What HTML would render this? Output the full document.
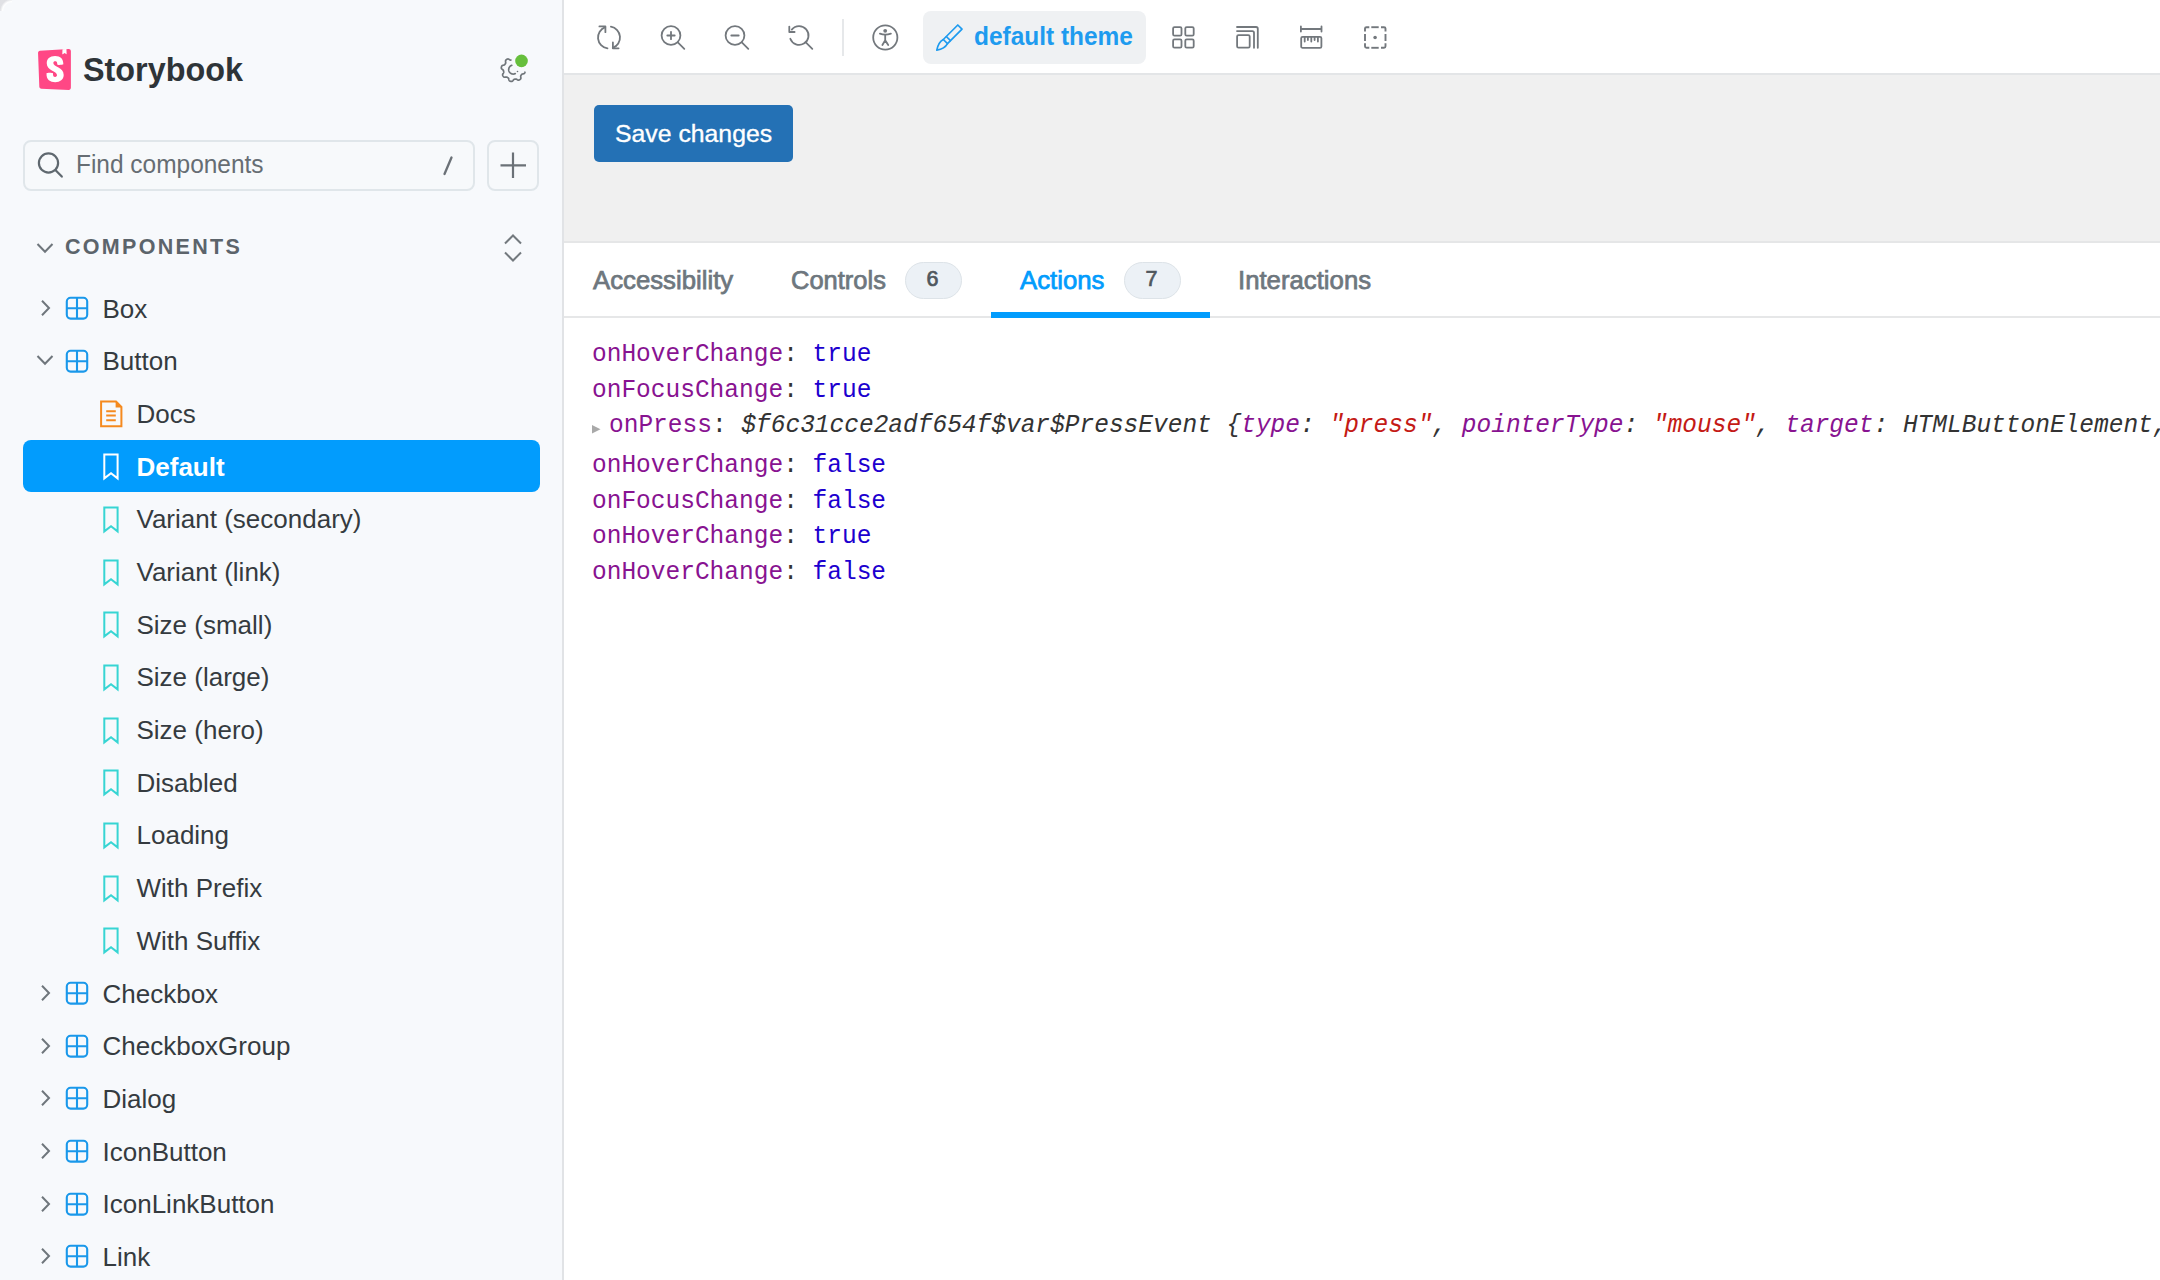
<!DOCTYPE html><html><head><meta charset="utf-8"><title>Storybook</title><style>
*{margin:0;padding:0;box-sizing:border-box}
html,body{width:2160px;height:1280px;overflow:hidden;background:#fff;font-family:"Liberation Sans", sans-serif}
.t{position:absolute;white-space:pre}
.a{position:absolute}
svg{position:absolute;overflow:visible}
</style></head><body>
<div class="a" style="left:0;top:0;width:562px;height:1280px;background:#F7F9FC"></div>
<div class="a" style="left:562px;top:0;width:2px;height:1280px;background:#E1E3E6"></div>
<div class="a" style="left:0;top:0;width:12px;height:11px;background:radial-gradient(circle at 12px 11px, rgba(246,249,252,0) 8px, rgba(255,255,255,.8) 9.5px, rgba(205,205,210,.55) 12px)"></div>
<svg style="left:38px;top:49px" width="33" height="41" viewBox="0 0 256 319"><path fill="#FF4785" d="M9.872 293.324.012 30.574C-.315 21.895 6.338 14.54 15.005 13.998L238.494.03c8.822-.552 16.42 6.153 16.972 14.975.02.332.031.665.031.998v286.314c0 8.839-7.165 16.004-16.004 16.004-.24 0-.48-.005-.718-.016l-213.627-9.595c-8.32-.373-14.963-7.065-15.276-15.386Z"/><path fill="#FFF" d="m188.665 39.127 1.527-36.716L220.884 0l1.322 37.863a2.387 2.387 0 0 1-3.864 1.96l-11.835-9.325-14.013 10.63a2.387 2.387 0 0 1-3.829-2.001Zm-39.251 80.853c0 6.227 41.942 3.243 47.572-1.131 0-42.402-22.752-64.684-64.415-64.684-41.662 0-65.005 22.628-65.005 56.57 0 59.117 79.78 60.249 79.78 92.494 0 9.052-4.433 14.426-14.184 14.426-12.705 0-17.729-6.49-17.138-28.552 0-4.786-48.458-6.278-49.936 0-3.762 53.466 29.548 68.887 67.665 68.887 36.935 0 65.892-19.687 65.892-55.326 0-63.36-80.961-61.663-80.961-93.06 0-12.728 9.455-14.425 15.07-14.425 5.909 0 16.546 1.042 15.66 24.801Z"/></svg>
<div class="t" style="left:83.00px;top:53.27px;font-size:33px;line-height:33px;color:#2E3438;font-weight:700;transform:scaleX(0.98);transform-origin:0 0;">Storybook</div>
<svg style="left:500px;top:56px" width="28" height="28" viewBox="0 0 28 28"><g fill="none" stroke="#6F757A" stroke-width="1.7" stroke-linecap="round" stroke-linejoin="round"><path d="M24.95 16.24 L24.89 16.44 L24.82 16.64 L24.74 16.84 L24.64 17.03 L24.52 17.21 L24.37 17.37 L24.18 17.52 L23.94 17.65 L23.65 17.75 L23.33 17.83 L23.00 17.89 L22.69 17.96 L22.42 18.03 L22.19 18.11 L22.01 18.21 L21.85 18.33 L21.72 18.45 L21.60 18.58 L21.49 18.71 L21.39 18.85 L21.29 18.99 L21.20 19.13 L21.10 19.27 L21.01 19.41 L20.92 19.56 L20.84 19.72 L20.77 19.88 L20.72 20.06 L20.69 20.27 L20.68 20.50 L20.71 20.77 L20.76 21.08 L20.81 21.41 L20.86 21.74 L20.88 22.05 L20.85 22.32 L20.79 22.56 L20.69 22.77 L20.57 22.95 L20.43 23.11 L20.28 23.26 L20.12 23.40 L19.95 23.53 L19.78 23.65 L19.60 23.76 L19.42 23.86 L19.23 23.95 L19.04 24.03 L18.83 24.10 L18.62 24.14 L18.39 24.15 L18.15 24.12 L17.89 24.04 L17.62 23.91 L17.34 23.74 L17.06 23.55 L16.80 23.38 L16.55 23.23 L16.33 23.13 L16.13 23.08 L15.94 23.05 L15.76 23.04 L15.59 23.05 L15.41 23.07 L15.24 23.09 L15.08 23.12 L14.91 23.15 L14.74 23.18 L14.58 23.22 L14.41 23.26 L14.24 23.31 L14.08 23.38 L13.91 23.47 L13.74 23.59 L13.57 23.75 L13.40 23.96 L13.22 24.22 L13.03 24.49 L12.83 24.76 L12.62 24.99 L12.41 25.16 L12.19 25.29 L11.98 25.37 L11.76 25.41 L11.55 25.43 L11.34 25.43 L11.13 25.41 L10.92 25.38 L10.71 25.34 L10.51 25.30 L10.31 25.24 L10.11 25.17 L9.91 25.09 L9.72 24.99 L9.54 24.87 L9.38 24.72 L9.23 24.53 L9.10 24.29 L9.00 24.00 L8.92 23.68 L8.86 23.35 L8.79 23.04 L8.72 22.77 L8.64 22.54 L8.54 22.36 L8.42 22.20 L8.30 22.07 L8.17 21.95 L8.04 21.84 L7.90 21.74 L7.76 21.64 L7.62 21.55 L7.48 21.45 L7.34 21.36 L7.19 21.27 L7.03 21.19 L6.87 21.12 L6.69 21.07 L6.48 21.04 L6.25 21.03 L5.98 21.06 L5.67 21.11 L5.34 21.16 L5.01 21.21 L4.70 21.23 L4.43 21.20 L4.19 21.14 L3.98 21.04 L3.80 20.92 L3.64 20.78 L3.49 20.63 L3.35 20.47 L3.22 20.30 L3.10 20.13 L2.99 19.95 L2.89 19.77 L2.80 19.58 L2.72 19.39 L2.65 19.18 L2.61 18.97 L2.60 18.74 L2.63 18.50 L2.71 18.24 L2.84 17.97 L3.01 17.69 L3.20 17.41 L3.37 17.15 L3.52 16.90 L3.62 16.68 L3.67 16.48 L3.70 16.29 L3.71 16.11 L3.70 15.94 L3.68 15.76 L3.66 15.59 L3.63 15.43 L3.60 15.26 L3.57 15.09 L3.53 14.93 L3.49 14.76 L3.44 14.59 L3.37 14.43 L3.28 14.26 L3.16 14.09 L3.00 13.92 L2.79 13.75 L2.53 13.57 L2.26 13.38 L1.99 13.18 L1.76 12.97 L1.59 12.76 L1.46 12.54 L1.38 12.33 L1.34 12.11 L1.32 11.90 L1.32 11.69 L1.34 11.48 L1.37 11.27 L1.41 11.06 L1.45 10.86 L1.51 10.66 L1.58 10.46 L1.66 10.26 L1.76 10.07 L1.88 9.89 L2.03 9.73 L2.22 9.58 L2.46 9.45 L2.75 9.35 L3.07 9.27 L3.40 9.21 L3.71 9.14 L3.98 9.07 L4.21 8.99 L4.39 8.89 L4.55 8.77 L4.68 8.65 L4.80 8.52 L4.91 8.39 L5.01 8.25 L5.11 8.11 L5.20 7.97 L5.30 7.83 L5.39 7.69 L5.48 7.54 L5.56 7.38 L5.63 7.22 L5.68 7.04 L5.71 6.83 L5.72 6.60 L5.69 6.33 L5.64 6.02 L5.59 5.69 L5.54 5.36 L5.52 5.05 L5.55 4.78 L5.61 4.54 L5.71 4.33 L5.83 4.15 L5.97 3.99 L6.12 3.84 L6.28 3.70 L6.45 3.57 L6.62 3.45 L6.80 3.34 L6.98 3.24 L7.17 3.15 L7.36 3.07 L7.57 3.00 L7.78 2.96 L8.01 2.95 L8.25 2.98 L8.51 3.06 L8.78 3.19 L9.06 3.36 L9.34 3.55 L9.60 3.72 L9.85 3.87 L10.07 3.97 L10.27 4.02 L10.46 4.05 L10.64 4.06 L10.81 4.05 L10.99 4.03"/><path d="M15.24 17.56 L15.03 17.66 L14.81 17.75 L14.59 17.83 L14.36 17.90 L14.14 17.95 L13.90 17.99 L13.67 18.03 L13.44 18.04 L13.20 18.05 L12.96 18.04 L12.73 18.03 L12.50 17.99 L12.26 17.95 L12.04 17.90 L11.81 17.83 L11.59 17.75 L11.37 17.66 L11.16 17.56 L10.95 17.45 L10.75 17.32 L10.55 17.19 L10.37 17.05 L10.19 16.89 L10.02 16.73 L9.86 16.56 L9.70 16.38 L9.56 16.20 L9.43 16.00 L9.30 15.80 L9.19 15.59 L9.09 15.38 L9.00 15.16 L8.92 14.94 L8.85 14.71 L8.80 14.49 L8.76 14.25 L8.72 14.02 L8.71 13.79 L8.70 13.55 L8.71 13.31 L8.72 13.08 L8.76 12.85 L8.80 12.61 L8.85 12.39 L8.92 12.16 L9.00 11.94 L9.09 11.72 L9.19 11.51 L9.30 11.30 L9.43 11.10 L9.56 10.90 L9.70 10.72 L9.86 10.54 L10.02 10.37 L10.19 10.21 L10.37 10.05 L10.55 9.91 L10.75 9.78 L10.95 9.65 L11.16 9.54 L11.37 9.44 L11.59 9.35 L11.81 9.27"/></g><circle cx="17.5" cy="15.5" r="0.8" fill="#6F757A"/><circle cx="21.5" cy="4.9" r="6.3" fill="#66BF3C"/></svg>
<div class="a" style="left:23px;top:139.5px;width:452px;height:51.5px;border:2px solid #E0E6EA;border-radius:8px;background:#F7F9FB"></div>
<svg style="left:36px;top:151px" width="30" height="30" viewBox="0 0 30 30"><g fill="none" stroke="#5F686F" stroke-width="2.2" stroke-linecap="round"><circle cx="12.5" cy="12" r="9.6"/><path d="M19.6 19.2 L25.8 25.6"/></g></svg>
<div class="t" style="left:75.50px;top:152.41px;font-size:25.5px;line-height:25.5px;color:#666D73;font-weight:400;transform:scaleX(0.959);transform-origin:0 0;">Find components</div>
<svg style="left:440px;top:154px" width="16" height="22" viewBox="0 0 16 22"><path d="M11.5 3.5 L4.5 20" stroke="#6B7177" stroke-width="2.3" stroke-linecap="round"/></svg>
<div class="a" style="left:487px;top:139.5px;width:52px;height:51.5px;border:2px solid #E0E6EA;border-radius:8px;background:#F7F9FB"></div>
<svg style="left:499px;top:151px" width="28" height="28" viewBox="0 0 28 28"><path d="M14 1.5V27M1.5 14.3H27" stroke="#6B7177" stroke-width="2.2"/></svg>
<svg style="left:35px;top:240px" width="20" height="16" viewBox="0 0 20 16"><path d="M2.5 4 L10 11.8 L17.5 4" fill="none" stroke="#6F767C" stroke-width="2"/></svg>
<div class="t" style="left:65.00px;top:236.60px;font-size:21.5px;line-height:21.5px;color:#5C646B;font-weight:700;letter-spacing:2.3px;">COMPONENTS</div>
<svg style="left:500px;top:232px" width="26" height="32" viewBox="0 0 26 32"><g fill="none" stroke="#73797E" stroke-width="2"><path d="M5 11.5 L13 3.5 L21 11.5"/><path d="M5 20.5 L13 28.5 L21 20.5"/></g></svg>
<svg style="left:38px;top:298.20px" width="14" height="20" viewBox="0 0 14 20"><path d="M4 2.8 L11 10 L4 17.2" fill="none" stroke="#6F767C" stroke-width="2"/></svg>
<svg style="left:65px;top:296.20px" width="24" height="24" viewBox="0 0 24 24"><g fill="none" stroke="#1A98EA" stroke-width="2.1"><rect x="1.8" y="1.8" width="20.4" height="20.8" rx="3.8"/><path d="M12 1.8V22.6M1.8 12.2H22.2"/></g></svg>
<div class="t" style="left:102.50px;top:295.79px;font-size:26px;line-height:26px;color:#353B40;font-weight:400;">Box</div>
<svg style="left:35px;top:353.37px" width="20" height="14" viewBox="0 0 20 14"><path d="M2.5 3 L10 10.8 L17.5 3" fill="none" stroke="#6F767C" stroke-width="2"/></svg>
<svg style="left:65px;top:348.87px" width="24" height="24" viewBox="0 0 24 24"><g fill="none" stroke="#1A98EA" stroke-width="2.1"><rect x="1.8" y="1.8" width="20.4" height="20.8" rx="3.8"/><path d="M12 1.8V22.6M1.8 12.2H22.2"/></g></svg>
<div class="t" style="left:102.50px;top:348.46px;font-size:26px;line-height:26px;color:#353B40;font-weight:400;">Button</div>
<svg style="left:98.5px;top:398.54px" width="26" height="30" viewBox="0 0 26 30"><g fill="none" stroke="#F58A1F" stroke-width="2"><path d="M2.1 2.6 H17 L22.4 8 V27.3 H2.1 Z"/><path d="M7.2 12.2H16.8M7.2 16.6H16.8M7.2 21.2H16.8"/></g><path d="M16.6 2.6 L22.4 8.4 H16.6 Z" fill="#F58A1F"/></svg>
<div class="t" style="left:136.50px;top:401.13px;font-size:26px;line-height:26px;color:#353B40;font-weight:400;">Docs</div>
<div class="a" style="left:22.5px;top:440.21px;width:517px;height:52.2px;background:#029CFD;border-radius:8px"></div>
<svg style="left:101px;top:451.21px" width="20" height="30" viewBox="0 0 20 30"><path d="M3.3 3.6 H16.6 V27.4 L10 22.2 L3.3 27.4 Z" fill="none" stroke="#FFFFFF" stroke-width="2" stroke-linejoin="miter"/></svg>
<div class="t" style="left:136.50px;top:453.80px;font-size:26px;line-height:26px;color:#FFFFFF;font-weight:700;">Default</div>
<svg style="left:101px;top:503.88px" width="20" height="30" viewBox="0 0 20 30"><path d="M3.3 3.6 H16.6 V27.4 L10 22.2 L3.3 27.4 Z" fill="none" stroke="#37D5D3" stroke-width="2" stroke-linejoin="miter"/></svg>
<div class="t" style="left:136.50px;top:506.47px;font-size:26px;line-height:26px;color:#353B40;font-weight:400;">Variant (secondary)</div>
<svg style="left:101px;top:556.55px" width="20" height="30" viewBox="0 0 20 30"><path d="M3.3 3.6 H16.6 V27.4 L10 22.2 L3.3 27.4 Z" fill="none" stroke="#37D5D3" stroke-width="2" stroke-linejoin="miter"/></svg>
<div class="t" style="left:136.50px;top:559.14px;font-size:26px;line-height:26px;color:#353B40;font-weight:400;">Variant (link)</div>
<svg style="left:101px;top:609.22px" width="20" height="30" viewBox="0 0 20 30"><path d="M3.3 3.6 H16.6 V27.4 L10 22.2 L3.3 27.4 Z" fill="none" stroke="#37D5D3" stroke-width="2" stroke-linejoin="miter"/></svg>
<div class="t" style="left:136.50px;top:611.81px;font-size:26px;line-height:26px;color:#353B40;font-weight:400;">Size (small)</div>
<svg style="left:101px;top:661.89px" width="20" height="30" viewBox="0 0 20 30"><path d="M3.3 3.6 H16.6 V27.4 L10 22.2 L3.3 27.4 Z" fill="none" stroke="#37D5D3" stroke-width="2" stroke-linejoin="miter"/></svg>
<div class="t" style="left:136.50px;top:664.48px;font-size:26px;line-height:26px;color:#353B40;font-weight:400;">Size (large)</div>
<svg style="left:101px;top:714.56px" width="20" height="30" viewBox="0 0 20 30"><path d="M3.3 3.6 H16.6 V27.4 L10 22.2 L3.3 27.4 Z" fill="none" stroke="#37D5D3" stroke-width="2" stroke-linejoin="miter"/></svg>
<div class="t" style="left:136.50px;top:717.15px;font-size:26px;line-height:26px;color:#353B40;font-weight:400;">Size (hero)</div>
<svg style="left:101px;top:767.23px" width="20" height="30" viewBox="0 0 20 30"><path d="M3.3 3.6 H16.6 V27.4 L10 22.2 L3.3 27.4 Z" fill="none" stroke="#37D5D3" stroke-width="2" stroke-linejoin="miter"/></svg>
<div class="t" style="left:136.50px;top:769.82px;font-size:26px;line-height:26px;color:#353B40;font-weight:400;">Disabled</div>
<svg style="left:101px;top:819.90px" width="20" height="30" viewBox="0 0 20 30"><path d="M3.3 3.6 H16.6 V27.4 L10 22.2 L3.3 27.4 Z" fill="none" stroke="#37D5D3" stroke-width="2" stroke-linejoin="miter"/></svg>
<div class="t" style="left:136.50px;top:822.49px;font-size:26px;line-height:26px;color:#353B40;font-weight:400;">Loading</div>
<svg style="left:101px;top:872.57px" width="20" height="30" viewBox="0 0 20 30"><path d="M3.3 3.6 H16.6 V27.4 L10 22.2 L3.3 27.4 Z" fill="none" stroke="#37D5D3" stroke-width="2" stroke-linejoin="miter"/></svg>
<div class="t" style="left:136.50px;top:875.16px;font-size:26px;line-height:26px;color:#353B40;font-weight:400;">With Prefix</div>
<svg style="left:101px;top:925.24px" width="20" height="30" viewBox="0 0 20 30"><path d="M3.3 3.6 H16.6 V27.4 L10 22.2 L3.3 27.4 Z" fill="none" stroke="#37D5D3" stroke-width="2" stroke-linejoin="miter"/></svg>
<div class="t" style="left:136.50px;top:927.83px;font-size:26px;line-height:26px;color:#353B40;font-weight:400;">With Suffix</div>
<svg style="left:38px;top:982.91px" width="14" height="20" viewBox="0 0 14 20"><path d="M4 2.8 L11 10 L4 17.2" fill="none" stroke="#6F767C" stroke-width="2"/></svg>
<svg style="left:65px;top:980.91px" width="24" height="24" viewBox="0 0 24 24"><g fill="none" stroke="#1A98EA" stroke-width="2.1"><rect x="1.8" y="1.8" width="20.4" height="20.8" rx="3.8"/><path d="M12 1.8V22.6M1.8 12.2H22.2"/></g></svg>
<div class="t" style="left:102.50px;top:980.50px;font-size:26px;line-height:26px;color:#353B40;font-weight:400;">Checkbox</div>
<svg style="left:38px;top:1035.58px" width="14" height="20" viewBox="0 0 14 20"><path d="M4 2.8 L11 10 L4 17.2" fill="none" stroke="#6F767C" stroke-width="2"/></svg>
<svg style="left:65px;top:1033.58px" width="24" height="24" viewBox="0 0 24 24"><g fill="none" stroke="#1A98EA" stroke-width="2.1"><rect x="1.8" y="1.8" width="20.4" height="20.8" rx="3.8"/><path d="M12 1.8V22.6M1.8 12.2H22.2"/></g></svg>
<div class="t" style="left:102.50px;top:1033.17px;font-size:26px;line-height:26px;color:#353B40;font-weight:400;">CheckboxGroup</div>
<svg style="left:38px;top:1088.25px" width="14" height="20" viewBox="0 0 14 20"><path d="M4 2.8 L11 10 L4 17.2" fill="none" stroke="#6F767C" stroke-width="2"/></svg>
<svg style="left:65px;top:1086.25px" width="24" height="24" viewBox="0 0 24 24"><g fill="none" stroke="#1A98EA" stroke-width="2.1"><rect x="1.8" y="1.8" width="20.4" height="20.8" rx="3.8"/><path d="M12 1.8V22.6M1.8 12.2H22.2"/></g></svg>
<div class="t" style="left:102.50px;top:1085.84px;font-size:26px;line-height:26px;color:#353B40;font-weight:400;">Dialog</div>
<svg style="left:38px;top:1140.92px" width="14" height="20" viewBox="0 0 14 20"><path d="M4 2.8 L11 10 L4 17.2" fill="none" stroke="#6F767C" stroke-width="2"/></svg>
<svg style="left:65px;top:1138.92px" width="24" height="24" viewBox="0 0 24 24"><g fill="none" stroke="#1A98EA" stroke-width="2.1"><rect x="1.8" y="1.8" width="20.4" height="20.8" rx="3.8"/><path d="M12 1.8V22.6M1.8 12.2H22.2"/></g></svg>
<div class="t" style="left:102.50px;top:1138.51px;font-size:26px;line-height:26px;color:#353B40;font-weight:400;">IconButton</div>
<svg style="left:38px;top:1193.59px" width="14" height="20" viewBox="0 0 14 20"><path d="M4 2.8 L11 10 L4 17.2" fill="none" stroke="#6F767C" stroke-width="2"/></svg>
<svg style="left:65px;top:1191.59px" width="24" height="24" viewBox="0 0 24 24"><g fill="none" stroke="#1A98EA" stroke-width="2.1"><rect x="1.8" y="1.8" width="20.4" height="20.8" rx="3.8"/><path d="M12 1.8V22.6M1.8 12.2H22.2"/></g></svg>
<div class="t" style="left:102.50px;top:1191.18px;font-size:26px;line-height:26px;color:#353B40;font-weight:400;">IconLinkButton</div>
<svg style="left:38px;top:1246.26px" width="14" height="20" viewBox="0 0 14 20"><path d="M4 2.8 L11 10 L4 17.2" fill="none" stroke="#6F767C" stroke-width="2"/></svg>
<svg style="left:65px;top:1244.26px" width="24" height="24" viewBox="0 0 24 24"><g fill="none" stroke="#1A98EA" stroke-width="2.1"><rect x="1.8" y="1.8" width="20.4" height="20.8" rx="3.8"/><path d="M12 1.8V22.6M1.8 12.2H22.2"/></g></svg>
<div class="t" style="left:102.50px;top:1243.85px;font-size:26px;line-height:26px;color:#353B40;font-weight:400;">Link</div>
<div class="a" style="left:564px;top:73px;width:1596px;height:2px;background:#E3E5E7"></div>
<svg style="left:593px;top:21px" width="32" height="32" viewBox="0 0 32 32"><g fill="none" stroke="#73787D" stroke-width="1.8" stroke-linecap="round" stroke-linejoin="round"><path d="M14.47 27.39 A11 11 0 0 1 12.24 6.16"/><path d="M6.4 5.4 H12.4 V11.2"/><path d="M17.9 5.67 A11 11 0 0 1 19.76 26.84"/><path d="M19.9 21.4 V27.3 H25.6"/></g></svg>
<svg style="left:657px;top:21px" width="32" height="32" viewBox="0 0 32 32"><g fill="none" stroke="#73787D" stroke-width="1.8" stroke-linecap="round" stroke-linejoin="round"><circle cx="14" cy="14.5" r="9.4"/><path d="M20.8 21.3 L27.3 27.8"/><path d="M10.3 14.5H17.7M14 10.8V18.2"/></g></svg>
<svg style="left:721px;top:21px" width="32" height="32" viewBox="0 0 32 32"><g fill="none" stroke="#73787D" stroke-width="1.8" stroke-linecap="round" stroke-linejoin="round"><circle cx="14" cy="14.5" r="9.4"/><path d="M20.8 21.3 L27.3 27.8"/><path d="M10.3 14.5H17.7"/></g></svg>
<svg style="left:785px;top:21px" width="32" height="32" viewBox="0 0 32 32"><g fill="none" stroke="#73787D" stroke-width="1.8" stroke-linecap="round" stroke-linejoin="round"><path d="M5.3 17.8 A9.4 9.4 0 1 0 6.8 8.6"/><path d="M20.8 21.3 L27.3 27.8"/><path d="M4.3 5.6 V11 H9.6"/></g></svg>
<div class="a" style="left:842px;top:19px;width:2px;height:37px;background:#E6E8EA"></div>
<svg style="left:869px;top:21px" width="32" height="32" viewBox="0 0 32 32"><g fill="none" stroke="#73787D" stroke-width="1.8" stroke-linecap="round" stroke-linejoin="round"><circle cx="16.3" cy="16.5" r="12.1"/><path d="M10.9 12.6 Q16.2 14.6 21.9 12.6"/><path d="M16.2 14.2 V19.3 L13.4 24 M16.2 19.3 L19.2 24"/></g><circle cx="16.2" cy="9.8" r="1.9" fill="#73787D"/></svg>
<div class="a" style="left:922.5px;top:11px;width:223px;height:52.5px;background:#EFF1F3;border-radius:8px"></div>
<svg style="left:933px;top:21px" width="32" height="32" viewBox="0 0 32 32"><g fill="none" stroke="#1E9BEF" stroke-width="1.7" stroke-linejoin="round"><path d="M24.8 4 L29 8.2 L17.5 19.7 L13.3 15.5 Z"/><path d="M13.3 15.5 L10.3 18.5 L14.5 22.7 L17.5 19.7"/><path d="M10.3 18.5 C6.5 20.5 4.6 25 3.8 29.2 C8 28.5 12.4 26.6 14.5 22.7"/></g></svg>
<div class="t" style="left:974.00px;top:22.99px;font-size:26px;line-height:26px;color:#1E9BEF;font-weight:700;transform:scaleX(0.94);transform-origin:0 0;">default theme</div>
<svg style="left:1167px;top:21px" width="32" height="32" viewBox="0 0 32 32"><g fill="none" stroke="#73787D" stroke-width="1.8" stroke-linecap="round" stroke-linejoin="round"><rect x="6.1" y="6.1" width="8.4" height="8.6" rx="1.4"/><rect x="18.3" y="6.1" width="8.4" height="8.6" rx="1.4"/><rect x="6.1" y="18.3" width="8.4" height="8.4" rx="1.4"/><rect x="18.3" y="18.3" width="8.4" height="8.4" rx="1.4"/></g></svg>
<svg style="left:1231px;top:21px" width="32" height="32" viewBox="0 0 32 32"><g fill="none" stroke="#73787D" stroke-width="1.8" stroke-linecap="round" stroke-linejoin="round"><rect x="6.1" y="14.1" width="12.6" height="12.6" rx="1.4"/><path d="M6 10.1 H21.3 Q23 10.1 23 11.8 V26.8"/><path d="M6 6 H25 Q26.8 6 26.8 7.8 V26.8"/></g></svg>
<svg style="left:1295px;top:21px" width="32" height="32" viewBox="0 0 32 32"><g fill="none" stroke="#73787D" stroke-width="1.8" stroke-linecap="round" stroke-linejoin="round"><path d="M6 8 H26.4 M5.9 5.4 V10.6 M26.5 5.4 V10.6"/><rect x="6.2" y="15.9" width="20.2" height="10.9" rx="1.4"/><path d="M9.7 16 V20.6 M12.9 16 V19 M16.3 16 V20.6 M19.6 16 V19 M22.9 16 V20.6"/></g></svg>
<svg style="left:1359px;top:21px" width="32" height="32" viewBox="0 0 32 32"><g fill="none" stroke="#73787D" stroke-width="1.9" stroke-linecap="butt"><path d="M6 10.5 V7.5 Q6 6.2 7.5 6.2 H10.3"/><path d="M12.3 6.2 H19.7"/><path d="M22 6.2 H25 Q26.5 6.2 26.5 7.5 V10.5"/><path d="M6 13 V20"/><path d="M26.5 13 V20"/><path d="M6 22.3 V25.3 Q6 26.8 7.5 26.8 H10.3"/><path d="M12.3 26.8 H19.7"/><path d="M22 26.8 H25 Q26.5 26.8 26.5 25.3 V22.3"/></g><circle cx="16.1" cy="16.5" r="1.8" fill="#73787D"/></svg>
<div class="a" style="left:564px;top:75px;width:1596px;height:166px;background:#F0F0F0"></div>
<div class="a" style="left:564px;top:241px;width:1596px;height:2px;background:#E5E6E7"></div>
<div class="a" style="left:594px;top:105px;width:199px;height:56.5px;background:#2471B5;border-radius:5px"></div>
<div class="t" style="left:615.30px;top:121.88px;font-size:24.6px;line-height:24.6px;color:#FFFFFF;font-weight:400;transform:scaleX(1.008);transform-origin:0 0;;-webkit-text-stroke:0.35px #FFFFFF">Save changes</div>
<div class="a" style="left:564px;top:316px;width:1596px;height:2px;background:#E6E7E8"></div>
<div class="t" style="left:592.50px;top:266.99px;font-size:26px;line-height:26px;color:#6E777E;font-weight:400;transform:scaleX(0.99);transform-origin:0 0;;-webkit-text-stroke:0.75px #6E777E">Accessibility</div>
<div class="t" style="left:790.50px;top:266.99px;font-size:26px;line-height:26px;color:#6E777E;font-weight:400;transform:scaleX(0.98);transform-origin:0 0;;-webkit-text-stroke:0.75px #6E777E">Controls</div>
<div class="a" style="left:905px;top:261.5px;width:57px;height:37px;background:#ECF1F6;border:1.5px solid #DDE3E8;border-radius:19px"></div>
<div class="t" style="left:926.50px;top:268.80px;font-size:21.5px;line-height:21.5px;color:#4F575D;font-weight:400;;-webkit-text-stroke:0.7px #4F575D">6</div>
<div class="t" style="left:1019.50px;top:266.99px;font-size:26px;line-height:26px;color:#029CFD;font-weight:400;transform:scaleX(0.99);transform-origin:0 0;;-webkit-text-stroke:0.75px #029CFD">Actions</div>
<div class="a" style="left:1123.5px;top:261.5px;width:57.5px;height:37px;background:#ECF1F6;border:1.5px solid #DDE3E8;border-radius:19px"></div>
<div class="t" style="left:1145.50px;top:268.80px;font-size:21.5px;line-height:21.5px;color:#4F575D;font-weight:400;;-webkit-text-stroke:0.7px #4F575D">7</div>
<div class="a" style="left:991px;top:312px;width:219px;height:5.5px;background:#029CFD"></div>
<div class="t" style="left:1237.50px;top:266.99px;font-size:26px;line-height:26px;color:#6E777E;font-weight:400;transform:scaleX(0.99);transform-origin:0 0;;-webkit-text-stroke:0.75px #6E777E">Interactions</div>
<div class="t" style="left:591.5px;top:341.09px;font-family:'Liberation Mono', monospace;font-size:26.5px;line-height:26.5px;color:#333;transform:scaleX(0.9245);transform-origin:0 0"><span style="color:#881391">onHoverChange</span>: <span style="color:#1C00CF">true</span></div>
<div class="t" style="left:591.5px;top:377.09px;font-family:'Liberation Mono', monospace;font-size:26.5px;line-height:26.5px;color:#333;transform:scaleX(0.9245);transform-origin:0 0"><span style="color:#881391">onFocusChange</span>: <span style="color:#1C00CF">true</span></div>
<svg style="left:590px;top:423px" width="12" height="12" viewBox="0 0 12 12"><path d="M2 2 L10.5 6.2 L2 10.5Z" fill="#A9A9A9"/></svg>
<div class="t" style="left:608.5px;top:411.89px;font-family:'Liberation Mono', monospace;font-size:26.5px;line-height:26.5px;color:#333;transform:scaleX(0.9245);transform-origin:0 0"><span style="color:#881391">onPress</span>: <i style="color:#333333">$f6c31cce2adf654f$var$PressEvent {</i><i style="color:#881391">type</i><i>: </i><i style="color:#C41A16">"press"</i><i>, </i><i style="color:#881391">pointerType</i><i>: </i><i style="color:#C41A16">"mouse"</i><i>, </i><i style="color:#881391">target</i><i>: </i><i style="color:#333333">HTMLButtonElement, </i></div>
<div class="t" style="left:591.5px;top:451.99px;font-family:'Liberation Mono', monospace;font-size:26.5px;line-height:26.5px;color:#333;transform:scaleX(0.9245);transform-origin:0 0"><span style="color:#881391">onHoverChange</span>: <span style="color:#1C00CF">false</span></div>
<div class="t" style="left:591.5px;top:487.79px;font-family:'Liberation Mono', monospace;font-size:26.5px;line-height:26.5px;color:#333;transform:scaleX(0.9245);transform-origin:0 0"><span style="color:#881391">onFocusChange</span>: <span style="color:#1C00CF">false</span></div>
<div class="t" style="left:591.5px;top:523.39px;font-family:'Liberation Mono', monospace;font-size:26.5px;line-height:26.5px;color:#333;transform:scaleX(0.9245);transform-origin:0 0"><span style="color:#881391">onHoverChange</span>: <span style="color:#1C00CF">true</span></div>
<div class="t" style="left:591.5px;top:558.99px;font-family:'Liberation Mono', monospace;font-size:26.5px;line-height:26.5px;color:#333;transform:scaleX(0.9245);transform-origin:0 0"><span style="color:#881391">onHoverChange</span>: <span style="color:#1C00CF">false</span></div>
</body></html>
